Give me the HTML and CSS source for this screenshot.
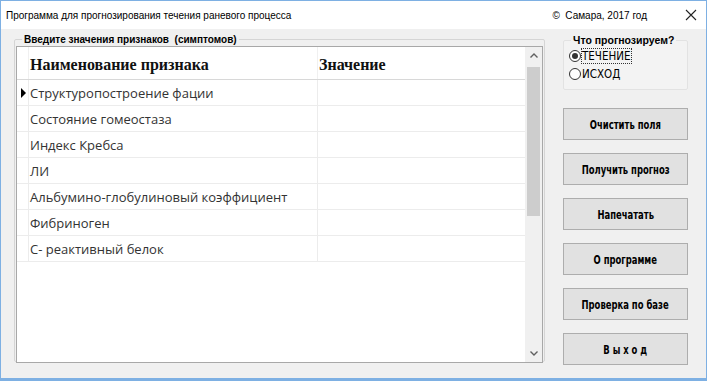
FILE: index.html
```html
<!DOCTYPE html>
<html lang="ru">
<head>
  <meta charset="UTF-8" />
  <title>Программа для прогнозирования течения раневого процесса</title>
  <link rel="stylesheet" href="styles.css">
</head>
<body>
  <div class="window">
    <div class="titlebar">
      <span class="title">Программа для прогнозирования течения раневого процесса</span>
      <span class="copy">©&nbsp; Самара, 2017 год</span>
      <span class="close">
        <svg viewBox="0 0 12 12" width="12" height="12">
          <path d="M1 1L11 11M11 1L1 11" stroke="#222" stroke-width="1.1" fill="none"/>
        </svg>
      </span>
    </div>

    <div class="client">
      <!-- левая группа: таблица признаков -->
      <fieldset class="group main-group">
        <legend>Введите значения признаков &nbsp;(симптомов)</legend>
        <div class="grid">
          <div class="grid-body">
            <div class="row head">
              <div class="cell ind"></div>
              <div class="cell name">Наименование признака</div>
              <div class="cell val">Значение</div>
            </div>
            <div class="row">
              <div class="cell ind"><span class="marker"></span></div>
              <div class="cell name">Структуропостроение фации</div>
              <div class="cell val"></div>
            </div>
            <div class="row">
              <div class="cell ind"></div>
              <div class="cell name">Состояние гомеостаза</div>
              <div class="cell val"></div>
            </div>
            <div class="row">
              <div class="cell ind"></div>
              <div class="cell name">Индекс Кребса</div>
              <div class="cell val"></div>
            </div>
            <div class="row">
              <div class="cell ind"></div>
              <div class="cell name">ЛИ</div>
              <div class="cell val"></div>
            </div>
            <div class="row">
              <div class="cell ind"></div>
              <div class="cell name">Альбумино-глобулиновый коэффициент</div>
              <div class="cell val"></div>
            </div>
            <div class="row">
              <div class="cell ind"></div>
              <div class="cell name">Фибриноген</div>
              <div class="cell val"></div>
            </div>
            <div class="row">
              <div class="cell ind"></div>
              <div class="cell name">С- реактивный белок</div>
              <div class="cell val"></div>
            </div>
          </div>
          <div class="scrollbar">
            <div class="arrow up">
              <svg viewBox="0 0 8 5" width="8" height="5"><path d="M0.5 4.5L4 1L7.5 4.5" stroke="#606060" stroke-width="1.4" fill="none"/></svg>
            </div>
            <div class="track">
              <div class="thumb"></div>
            </div>
            <div class="arrow down">
              <svg viewBox="0 0 8 5" width="8" height="5"><path d="M0.5 0.5L4 4L7.5 0.5" stroke="#606060" stroke-width="1.4" fill="none"/></svg>
            </div>
          </div>
        </div>
      </fieldset>

      <!-- правая панель -->
      <div class="side">
        <fieldset class="group radio-group">
          <legend>Что прогнозируем?</legend>
          <label class="radio checked"><span class="dot"></span><span class="radio-text focus">ТЕЧЕНИЕ</span></label>
          <label class="radio"><span class="dot"></span><span class="radio-text">ИСХОД</span></label>
        </fieldset>

        <div class="buttons">
          <button class="btn"><span>Очистить поля</span></button>
          <button class="btn"><span>Получить прогноз</span></button>
          <button class="btn"><span>Напечатать</span></button>
          <button class="btn"><span>О программе</span></button>
          <button class="btn"><span>Проверка по базе</span></button>
          <button class="btn"><span>В ы х о д</span></button>
        </div>
      </div>
    </div>
  </div>
</body>
</html>
```

FILE: styles.css
```css
:root {
  --frame: #7eb0e3;
  --client-bg: #f0f0f0;
  --group-line: #d5d5d5;
  --grid-line: #ececec;
  --btn-bg: #e1e1e1;
  --btn-border: #adadad;
}

body {
  margin: 0;
  background: #fff;
}

.window {
  width: 707px;
  height: 381px;
  box-sizing: border-box;
  border: 1px solid var(--frame);
  border-bottom-width: 3px;
  display: flex;
  flex-direction: column;
  background: var(--client-bg);
}

.titlebar {
  height: 28px;
  background: #fff;
  display: flex;
  align-items: center;
  font-family: "Liberation Sans", Arial, sans-serif;
  font-size: 10px;
  color: #000;
  padding-left: 5px;
}

.title {
  flex: 1;
}

.copy {
  margin-right: 38px;
}

.close {
  width: 12px;
  height: 12px;
  margin-right: 9px;
  display: flex;
}

.client {
  flex: 1;
  display: flex;
  padding: 5px 0 0 13px;
}

/* рамки групп как у WinForms */
.group {
  margin: 0;
  border: 1px solid var(--group-line);
  border-radius: 2px;
  font-family: "Liberation Sans", Arial, sans-serif;
  font-weight: bold;
  font-size: 10px;
}

.group legend {
  padding: 0 2px;
  margin-left: 6px;
}

.main-group {
  width: 531px;
  height: 328px;
  box-sizing: border-box;
  padding: 1px 1px 0 1px;
}

.grid {
  height: 317px;
  box-sizing: border-box;
  border: 1px solid #a8a8a8;
  background: #fff;
  display: flex;
}

.grid-body {
  flex: 1;
}

.row {
  display: flex;
  height: 26px;
  border-bottom: 1px solid var(--grid-line);
  box-sizing: border-box;
}

.row.head {
  height: 33px;
  border-bottom: 1px solid #d8d8d8;
}

.cell {
  display: flex;
  align-items: center;
  box-sizing: border-box;
  font-family: "Open Sans", "Noto Sans", sans-serif;
  font-weight: normal;
  font-size: 13px;
  color: #333;
}

.cell.ind {
  width: 12px;
  border-right: 1px solid var(--grid-line);
  justify-content: center;
}

.cell.name {
  width: 289px;
  padding-left: 1px;
  border-right: 1px solid var(--grid-line);
}

.cell.val {
  flex: 1;
  padding-left: 1px;
}

.row.head .cell {
  font-family: "Liberation Serif", "Times New Roman", serif;
  font-weight: bold;
  font-size: 16px;
  color: #111;
  padding-top: 4px;
}

.row.head .cell.ind,
.row.head .cell.name {
  border-right-color: #f0f0f0;
}

.marker {
  width: 0;
  height: 0;
  border-top: 5px solid transparent;
  border-bottom: 5px solid transparent;
  border-left: 5px solid #000;
  margin-left: 2px;
}

.scrollbar {
  width: 17px;
  background: #f0f0f0;
  display: flex;
  flex-direction: column;
}

.arrow {
  height: 17px;
  display: flex;
  align-items: center;
  justify-content: center;
}

.track {
  flex: 1;
  padding: 3px 2px 0 2px;
}

.thumb {
  height: 149px;
  background: #cdcdcd;
}

.side {
  width: 125px;
  margin-left: 18px;
  display: flex;
  flex-direction: column;
}

.radio-group {
  height: 56px;
  box-sizing: border-box;
  padding: 1px 0 0 5px;
  background: #f3f3f3;
  border-color: #e2e2e2;
}

.radio-group legend {
  margin-left: 2px;
  font-size: 10.5px;
}

.radio {
  display: flex;
  align-items: center;
  height: 18px;
  font-family: "DejaVu Sans Condensed", "DejaVu Sans", sans-serif;
  font-weight: normal;
  font-size: 11.5px;
  color: #000;
}

.dot {
  width: 12px;
  height: 12px;
  border: 1px solid #333;
  border-radius: 50%;
  background: #fff;
  box-sizing: border-box;
  display: flex;
  align-items: center;
  justify-content: center;
  margin-right: 1px;
}

.radio.checked .dot::after {
  content: "";
  width: 6px;
  height: 6px;
  border-radius: 50%;
  background: #333;
}

.radio-text.focus {
  outline: 1px dotted #333;
  outline-offset: 0;
}

.buttons {
  margin-top: 18px;
  display: flex;
  flex-direction: column;
  gap: 13px;
}

.btn {
  height: 32px;
  width: 125px;
  background: var(--btn-bg);
  border: 1px solid var(--btn-border);
  font-family: "DejaVu Sans Condensed", "DejaVu Sans", sans-serif;
  font-weight: bold;
  font-size: 12.5px;
  color: #000;
  padding: 0;
}

/* узкий шрифт кнопок */
.btn span {
  display: inline-block;
  white-space: nowrap;
  transform: scaleX(0.75);
}
```
